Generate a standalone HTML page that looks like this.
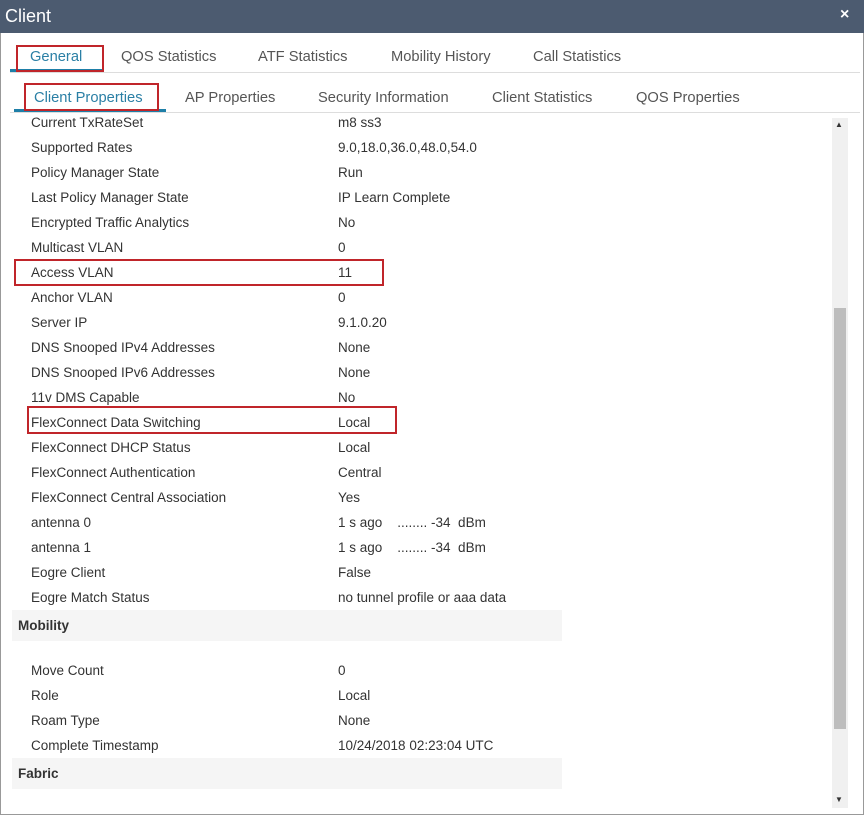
<!DOCTYPE html>
<html><head><style>
body{margin:0;width:864px;height:816px;background:#fff;font-family:"Liberation Sans",sans-serif;position:relative;overflow:hidden;color:#333}
.a{position:absolute}
.t{font-size:14.7px;color:#555;white-space:nowrap}
.r{font-size:13.5px;color:#333;white-space:nowrap}
.box{position:absolute;border:2px solid #c0252a;box-sizing:border-box}
</style></head><body>
<div class="a" style="left:0;top:0;width:864px;height:33px;background:#4c5b70"></div>
<div class="a" style="left:5px;top:6px;font-size:18px;color:#fff">Client</div>
<div class="a" style="left:840px;top:6px;font-size:16px;color:#fff;font-weight:bold">×</div>
<div class="a" style="left:0;top:33px;width:862px;height:781px;border:1px solid #999;border-top:none"></div>
<div class="a" style="left:10px;top:72px;width:850px;height:1px;background:#ddd"></div>
<div class="a" style="left:10px;top:112px;width:850px;height:1px;background:#ddd"></div>
<div class="a" style="left:10px;top:69px;width:92px;height:3px;background:#1e7fa8"></div>
<div class="a" style="left:14px;top:109px;width:152px;height:3px;background:#1e7fa8"></div>
<div class="a t" style="left:30px;top:49px;color:#2a7fa5">General</div>
<div class="a t" style="left:121px;top:49px">QOS Statistics</div>
<div class="a t" style="left:258px;top:49px">ATF Statistics</div>
<div class="a t" style="left:391px;top:49px">Mobility History</div>
<div class="a t" style="left:533px;top:49px">Call Statistics</div>
<div class="a t" style="left:34px;top:90px;color:#2a7fa5">Client Properties</div>
<div class="a t" style="left:185px;top:90px">AP Properties</div>
<div class="a t" style="left:318px;top:90px">Security Information</div>
<div class="a t" style="left:492px;top:90px">Client Statistics</div>
<div class="a t" style="left:636px;top:90px">QOS Properties</div>
<div class="box" style="left:16px;top:45px;width:88px;height:27px"></div>
<div class="box" style="left:24px;top:83px;width:135px;height:28px"></div>
<div class="box" style="left:14px;top:259px;width:370px;height:27px"></div>
<div class="box" style="left:27px;top:406px;width:370px;height:28px"></div>
<div class="a" style="left:832px;top:118px;width:16px;height:690px;background:#f0f0f0"></div>
<div class="a" style="left:834px;top:308px;width:12px;height:421px;background:#bdbdbd"></div>
<div class="a" style="left:835px;top:120px;font-size:8px;color:#333">▲</div>
<div class="a" style="left:835px;top:795px;font-size:8px;color:#333">▼</div>
<div class="a" style="left:12px;top:610px;width:550px;height:31px;background:#f5f5f5"></div>
<div class="a" style="left:12px;top:758px;width:550px;height:31px;background:#f5f5f5"></div>
<div class="a" style="left:18px;top:618px;font-size:13.5px;font-weight:bold;color:#333">Mobility</div>
<div class="a" style="left:18px;top:766px;font-size:13.5px;font-weight:bold;color:#333">Fabric</div>
<div id="rows"></div>
<script>
var d=[["Current TxRateSet","m8 ss3"],["Supported Rates","9.0,18.0,36.0,48.0,54.0"],["Policy Manager State","Run"],["Last Policy Manager State","IP Learn Complete"],["Encrypted Traffic Analytics","No"],["Multicast VLAN","0"],["Access VLAN","11"],["Anchor VLAN","0"],["Server IP","9.1.0.20"],["DNS Snooped IPv4 Addresses","None"],["DNS Snooped IPv6 Addresses","None"],["11v DMS Capable","No"],["FlexConnect Data Switching","Local"],["FlexConnect DHCP Status","Local"],["FlexConnect Authentication","Central"],["FlexConnect Central Association","Yes"],["antenna 0","1 s ago &nbsp;&nbsp;&nbsp;........ -34 &nbsp;dBm"],["antenna 1","1 s ago &nbsp;&nbsp;&nbsp;........ -34 &nbsp;dBm"],["Eogre Client","False"],["Eogre Match Status","no tunnel profile or aaa data"]];
var m=[["Move Count","0"],["Role","Local"],["Roam Type","None"],["Complete Timestamp","10/24/2018 02:23:04 UTC"]];
var h="";
d.forEach(function(r,i){var y=115+i*25;h+='<div class="a r" style="left:31px;top:'+y+'px">'+r[0]+'</div><div class="a r" style="left:338px;top:'+y+'px">'+r[1]+'</div>';});
m.forEach(function(r,i){var y=663+i*25;h+='<div class="a r" style="left:31px;top:'+y+'px">'+r[0]+'</div><div class="a r" style="left:338px;top:'+y+'px">'+r[1]+'</div>';});
document.getElementById("rows").innerHTML=h;
</script>
</body></html>
